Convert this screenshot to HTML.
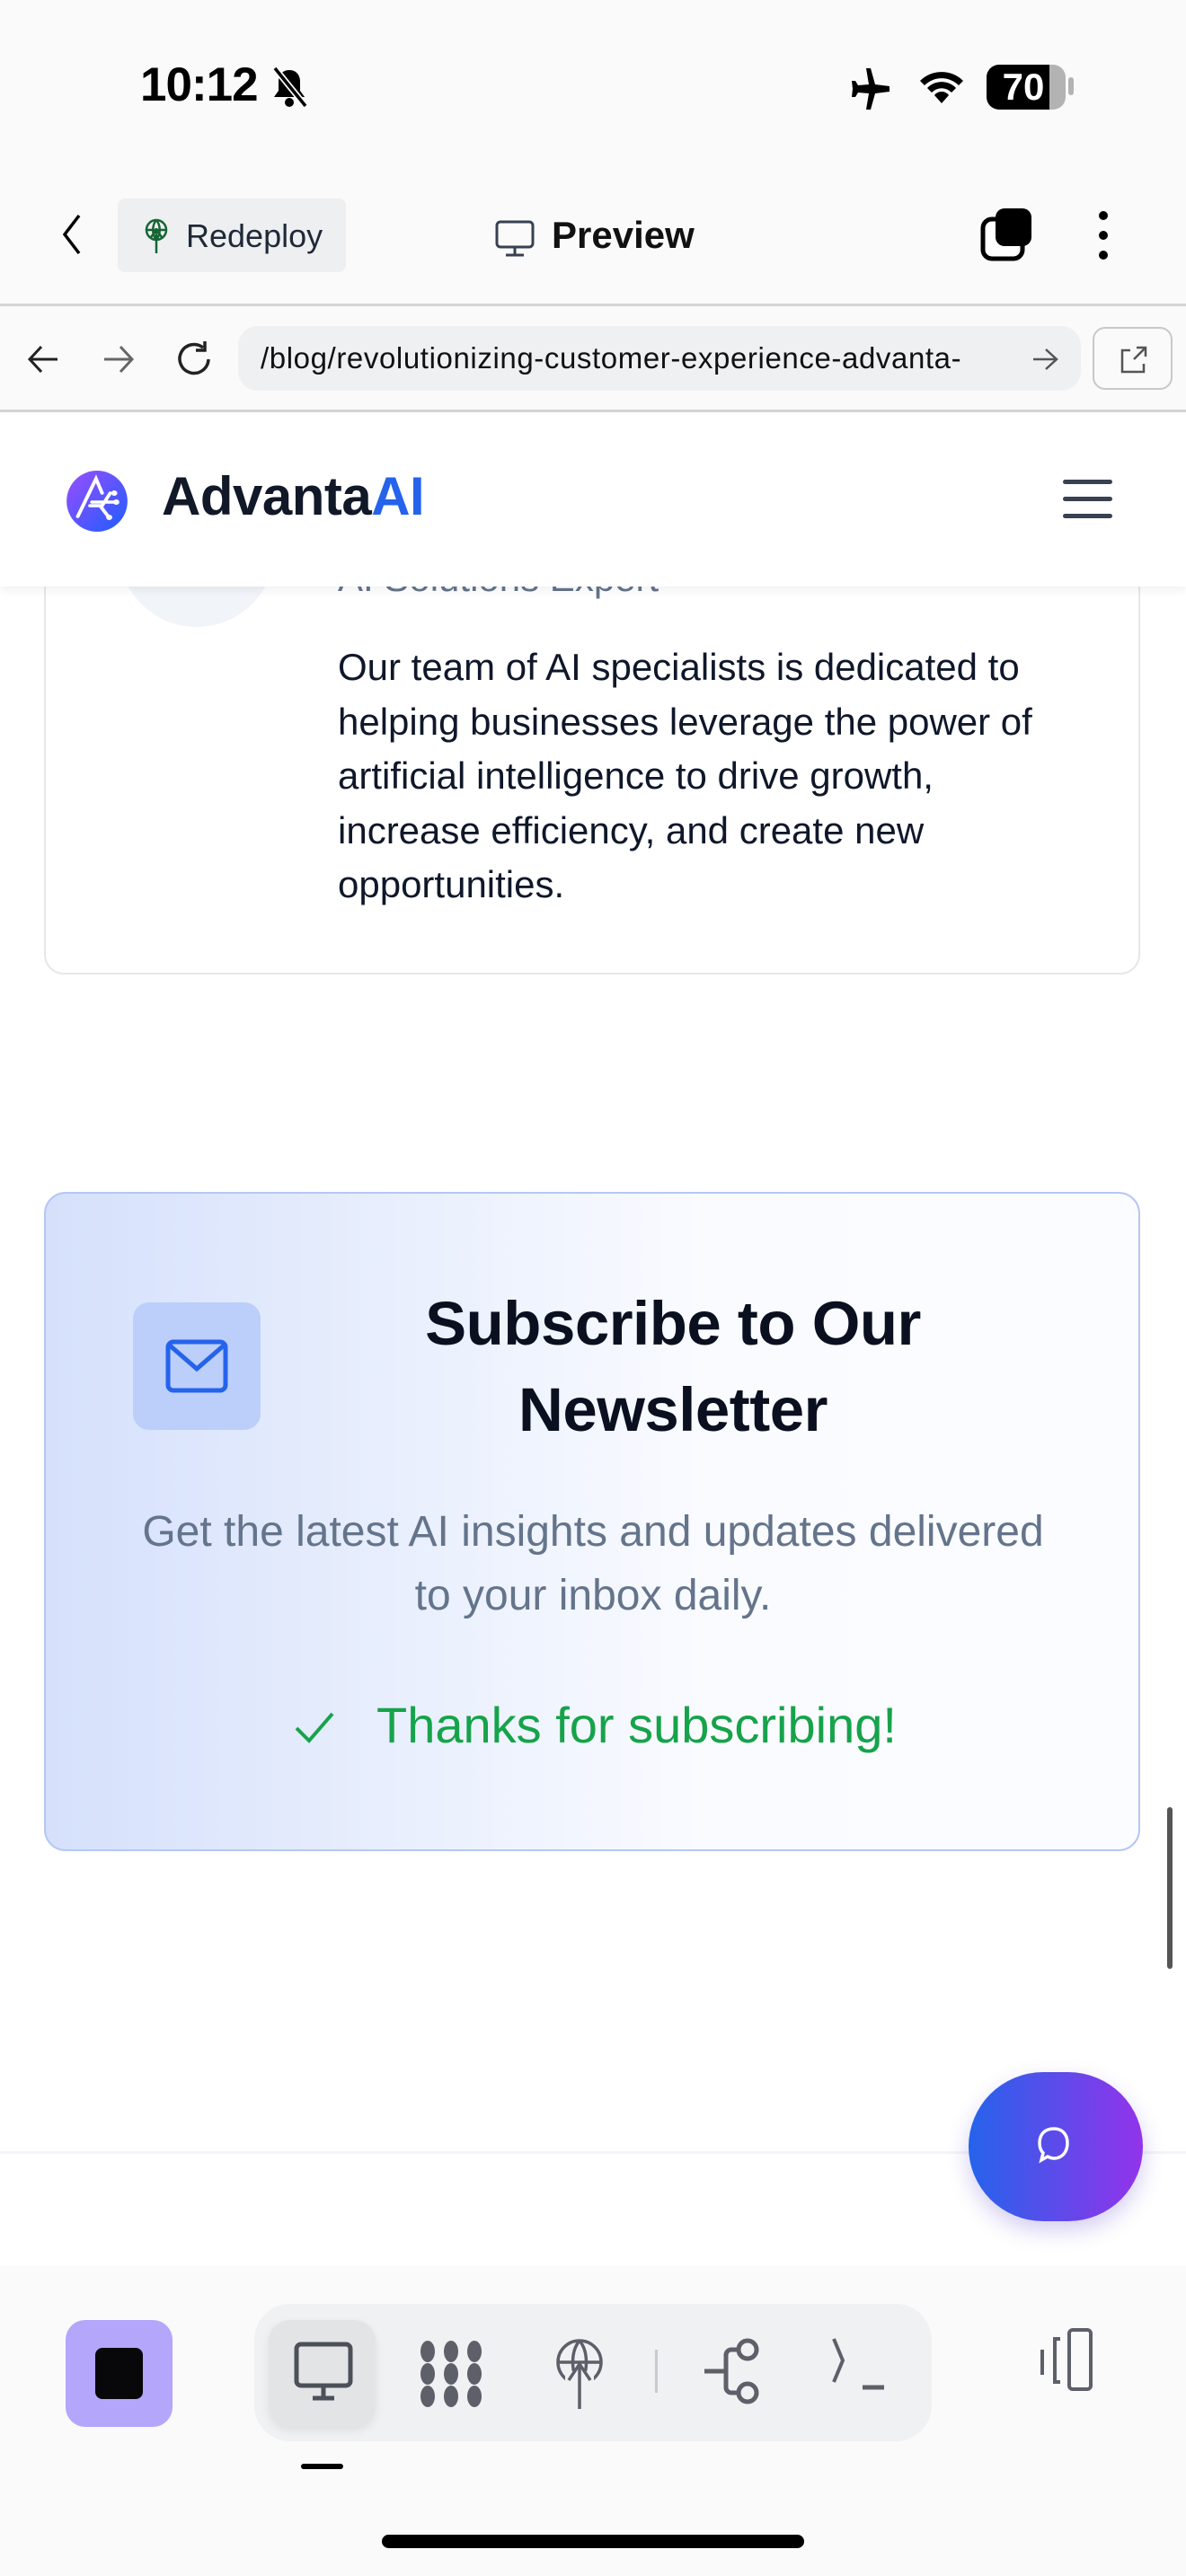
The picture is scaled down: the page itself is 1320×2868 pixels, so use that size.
<!DOCTYPE html>
<html><head><meta charset="utf-8">
<style>
*{margin:0;padding:0;box-sizing:border-box}
html,body{width:1320px;height:2868px;overflow:hidden;background:#fff;font-family:"Liberation Sans",sans-serif}
.abs{position:absolute}
</style></head><body>
<div class="abs" style="left:0;top:0;width:1320px;height:458px;background:#fafafa"></div>
<!-- status bar -->
<div class="abs" style="left:156px;top:64px;font-size:53px;font-weight:600;color:#000;letter-spacing:-1px">10:12</div>
<svg class="abs" style="left:300px;top:74px" width="44" height="46" viewBox="0 0 44 46"><path d="M22 4c-8 0-12 6-12 13v10l-5 7h34l-5-7V17c0-7-4-13-12-13z" fill="#000"/><circle cx="22" cy="40" r="5" fill="#000"/><path d="M6 2l34 42" stroke="#fafafa" stroke-width="7"/><path d="M6 2l34 42" stroke="#000" stroke-width="3.5"/></svg>
<svg class="abs" style="left:942px;top:74px" width="52" height="48" viewBox="0 0 52 48"><path d="M22 2l5 0 5 18 16 2v6l-16 2-5 18h-5l3-18-12-1-3 5h-4l1-9-1-9h4l3 5 12-1z" fill="#000"/></svg>
<svg class="abs" style="left:1020px;top:72px" width="56" height="48" viewBox="0 0 56 48"><path d="M4 18a34 34 0 0 1 48 0l-5 5a27 27 0 0 0-38 0z M12 26a22 22 0 0 1 32 0l-5 5a15 15 0 0 0-22 0z M20 34a10 10 0 0 1 16 0l-8 9z" fill="#000"/></svg>
<div class="abs" style="left:1098px;top:72px;width:88px;height:50px;border-radius:14px;background:#b3b3b3;overflow:hidden"><div style="width:70px;height:50px;background:#000"></div></div>
<div class="abs" style="left:1189px;top:86px;width:6px;height:20px;border-radius:3px;background:#b3b3b3"></div>
<div class="abs" style="left:1104px;top:70px;width:70px;text-align:center;font-size:42px;font-weight:700;color:#fff;line-height:54px">70</div>
<!-- toolbar -->
<svg class="abs" style="left:64px;top:236px" width="30" height="50" viewBox="0 0 30 50"><path d="M24 4L8 25l16 21" stroke="#000" stroke-width="3.5" fill="none"/></svg>
<div class="abs" style="left:131px;top:221px;width:254px;height:82px;border-radius:8px;background:#eeeff1"></div>
<svg class="abs" style="left:158px;top:242px" width="32" height="42" viewBox="0 0 32 42"><circle cx="16" cy="14" r="11" stroke="#166534" stroke-width="2.5" fill="none"/><path d="M5 14h22M16 3c-5 6-5 16 0 22M16 3c5 6 5 16 0 22M16 12v28M10 22l6-8 6 8" stroke="#166534" stroke-width="2.5" fill="none"/></svg>
<div class="abs" style="left:207px;top:242px;font-size:36px;color:#1f2937">Redeploy</div>
<svg class="abs" style="left:550px;top:244px" width="46" height="44" viewBox="0 0 46 44"><rect x="3" y="3" width="40" height="28" rx="4" stroke="#374151" stroke-width="3" fill="none"/><path d="M23 31v8M13 40h20" stroke="#374151" stroke-width="3"/></svg>
<div class="abs" style="left:614px;top:238px;font-size:42px;font-weight:600;color:#111">Preview</div>
<svg class="abs" style="left:1090px;top:230px" width="64" height="62" viewBox="0 0 64 62"><rect x="4" y="14" width="44" height="44" rx="10" stroke="#000" stroke-width="5" fill="#fff"/><rect x="18" y="2" width="40" height="42" rx="10" fill="#000"/></svg>
<svg class="abs" style="left:1216px;top:232px" width="24" height="60" viewBox="0 0 24 60"><circle cx="12" cy="8" r="5" fill="#000"/><circle cx="12" cy="30" r="5" fill="#000"/><circle cx="12" cy="52" r="5" fill="#000"/></svg>
<div class="abs" style="left:0;top:338px;width:1320px;height:3px;background:#d4d4d4"></div>
<!-- url row -->
<svg class="abs" style="left:28px;top:382px" width="40" height="36" viewBox="0 0 40 36"><path d="M36 18H6M18 4L5 18l13 14" stroke="#222" stroke-width="3" fill="none"/></svg>
<svg class="abs" style="left:112px;top:382px" width="40" height="36" viewBox="0 0 40 36"><path d="M4 18h30M22 4l13 14-13 14" stroke="#666" stroke-width="3" fill="none"/></svg>
<svg class="abs" style="left:194px;top:378px" width="46" height="46" viewBox="0 0 46 46"><path d="M38 22a16 16 0 1 1-6-13" stroke="#222" stroke-width="3.5" fill="none"/><path d="M34 2v10H24" stroke="#222" stroke-width="3.5" fill="none"/></svg>
<div class="abs" style="left:265px;top:363px;width:938px;height:72px;border-radius:22px;background:#eff0f2"></div>
<div class="abs" style="left:290px;top:380px;font-size:33px;color:#111;white-space:nowrap;letter-spacing:0.6px">/blog/revolutionizing-customer-experience-advanta-</div>
<svg class="abs" style="left:1148px;top:386px" width="32" height="28" viewBox="0 0 32 28"><path d="M2 14h26M16 3l12 11-12 11" stroke="#555" stroke-width="2.5" fill="none"/></svg>
<div class="abs" style="left:1216px;top:364px;width:89px;height:70px;border-radius:14px;border:2.5px solid #c8c8c8;background:#fafafa"></div>
<svg class="abs" style="left:1244px;top:384px" width="34" height="34" viewBox="0 0 34 34"><path d="M14 6H5v24h24v-9M18 16L31 3M21 3h10v10" stroke="#555" stroke-width="2.5" fill="none"/></svg>
<div class="abs" style="left:0;top:456px;width:1320px;height:3px;background:#d4d4d4"></div>

<!-- first card -->
<div class="abs" style="left:49px;top:500px;width:1220px;height:585px;border:2px solid #e5e7eb;border-top:none;border-radius:0 0 22px 22px;background:#fff"></div>
<div class="abs" style="left:131px;top:520px;width:176px;height:178px;border-radius:50%;background:#f1f4f8"></div>
<div class="abs" style="left:376px;top:620px;font-size:42px;color:#64748b">AI Solutions Expert</div>
<div class="abs" style="left:376px;top:713px;width:805px;font-size:42px;line-height:60.5px;color:#0f172a">Our team of AI specialists is dedicated to helping businesses leverage the power of artificial intelligence to drive growth, increase efficiency, and create new opportunities.</div>

<!-- header -->
<div class="abs" style="left:0;top:459px;width:1320px;height:194px;background:#fff;box-shadow:0 4px 10px rgba(0,0,0,0.06)"></div>
<svg class="abs" style="left:73px;top:523px" width="70" height="70" viewBox="0 0 62 70" preserveAspectRatio="none"><defs><linearGradient id="lg" x1="0" y1="0" x2="1" y2="1"><stop offset="0" stop-color="#9b4dff"/><stop offset="1" stop-color="#1d5eff"/></linearGradient></defs><ellipse cx="31" cy="35" rx="30" ry="34" fill="url(#lg)"/><path d="M12 52L30 10l6 16M24 40h12l8-14M26 36h22M34 40l8 12" stroke="#fff" stroke-width="3.5" fill="none" stroke-linecap="round"/><circle cx="48" cy="26" r="3" fill="#fff"/><circle cx="50" cy="36" r="3" fill="#fff"/><circle cx="43" cy="53" r="3" fill="#fff"/></svg>
<div class="abs" style="left:180px;top:518px;font-size:60px;font-weight:700;color:#111827;letter-spacing:-0.5px">Advanta<span style="color:#2563eb">AI</span></div>
<div class="abs" style="left:1183px;top:534px;width:55px;height:5px;border-radius:3px;background:#374151"></div>
<div class="abs" style="left:1183px;top:553px;width:55px;height:5px;border-radius:3px;background:#374151"></div>
<div class="abs" style="left:1183px;top:572px;width:55px;height:5px;border-radius:3px;background:#374151"></div>

<!-- newsletter -->
<div class="abs" style="left:49px;top:1327px;width:1220px;height:734px;border:2px solid #b4c8f5;border-radius:24px;background:linear-gradient(90deg,#d5e0fb 0%,#eaf0fd 35%,#f9fbff 60%,#fbfcff 100%)"></div>
<div class="abs" style="left:148px;top:1450px;width:142px;height:142px;border-radius:18px;background:#bccefa"></div>
<svg class="abs" style="left:183px;top:1490px" width="72" height="62" viewBox="0 0 72 62"><rect x="4" y="4" width="64" height="54" rx="6" stroke="#2563eb" stroke-width="5" fill="none"/><path d="M6 8l30 26 30-26" stroke="#2563eb" stroke-width="5" fill="none"/></svg>
<div class="abs" style="left:290px;top:1426px;width:918px;text-align:center;font-size:69px;font-weight:700;color:#0b1020;line-height:96px;letter-spacing:-0.5px">Subscribe to Our<br>Newsletter</div>
<div class="abs" style="left:60px;top:1670px;width:1200px;text-align:center;font-size:48px;line-height:71px;color:#64748b">Get the latest AI insights and updates delivered<br>to your inbox daily.</div>
<svg class="abs" style="left:326px;top:1902px" width="48" height="42" viewBox="0 0 48 42"><path d="M4 22l14 14L44 6" stroke="#16a34a" stroke-width="4" fill="none"/></svg>
<div class="abs" style="left:419px;top:1888px;font-size:56px;color:#16a34a">Thanks for subscribing!</div>
<div class="abs" style="left:1299px;top:2012px;width:6px;height:180px;border-radius:3px;background:#555"></div>

<div class="abs" style="left:0;top:2395px;width:1320px;height:3px;background:#f1f5f9"></div>
<div class="abs" style="left:1078px;top:2307px;width:194px;height:166px;border-radius:83px;background:linear-gradient(90deg,#2563eb,#9333ea);box-shadow:0 10px 24px rgba(80,60,200,0.25)"></div>
<svg class="abs" style="left:1152px;top:2366px" width="42" height="46" viewBox="0 0 42 46"><path d="M21 4c9 0 15 6 15 16s-6 17-15 17c-3 0-5-1-7-2l-7 4 2-8c-3-3-4-7-4-11 0-10 6-16 16-16z" stroke="#fff" stroke-width="3.5" fill="none"/></svg>

<!-- bottom bar -->
<div class="abs" style="left:0;top:2523px;width:1320px;height:345px;background:#fafafa"></div>
<div class="abs" style="left:73px;top:2583px;width:119px;height:119px;border-radius:22px;background:#b3a6fb"></div>
<div class="abs" style="left:106px;top:2614px;width:53px;height:57px;border-radius:8px;background:#08080a"></div>
<div class="abs" style="left:283px;top:2565px;width:754px;height:153px;border-radius:40px;background:#f0f1f3"></div>
<div class="abs" style="left:299px;top:2583px;width:119px;height:119px;border-radius:24px;background:#e3e4e6;box-shadow:0 4px 10px rgba(0,0,0,0.08)"></div>
<svg class="abs" style="left:326px;top:2606px" width="68" height="70" viewBox="0 0 68 70"><rect x="4" y="4" width="60" height="46" rx="5" stroke="#4b5059" stroke-width="5" fill="none"/><path d="M34 50v12M22 64h24" stroke="#4b5059" stroke-width="5"/></svg>
<svg class="abs" style="left:466px;top:2604px" width="74" height="78" viewBox="0 0 74 78"><g fill="#5d6069"><ellipse cx="10" cy="14" rx="8" ry="12"/><ellipse cx="36" cy="14" rx="8" ry="12"/><ellipse cx="62" cy="14" rx="8" ry="12"/><ellipse cx="10" cy="39" rx="8" ry="12"/><ellipse cx="36" cy="39" rx="8" ry="12"/><ellipse cx="62" cy="39" rx="8" ry="12"/><ellipse cx="10" cy="64" rx="8" ry="12"/><ellipse cx="36" cy="64" rx="8" ry="12"/><ellipse cx="62" cy="64" rx="8" ry="12"/></g></svg>
<svg class="abs" style="left:615px;top:2604px" width="60" height="80" viewBox="0 0 60 80"><circle cx="30" cy="26" r="24" stroke="#5d6069" stroke-width="3.5" fill="none"/><path d="M6 26h48M30 2c-10 12-10 36 0 48M30 2c10 12 10 36 0 48" stroke="#5d6069" stroke-width="3.5" fill="none"/><rect x="14" y="36" width="32" height="18" fill="#f0f1f3"/><path d="M30 28v50M18 46l12-18 12 18" stroke="#5d6069" stroke-width="3.5" fill="none"/></svg>
<div class="abs" style="left:729px;top:2616px;width:3px;height:48px;background:#c9cacd"></div>
<svg class="abs" style="left:780px;top:2598px" width="72" height="84" viewBox="0 0 72 84"><circle cx="52" cy="18" r="10" stroke="#5d6069" stroke-width="5" fill="none"/><circle cx="52" cy="66" r="10" stroke="#5d6069" stroke-width="5" fill="none"/><path d="M42 18h-8a6 6 0 0 0-6 6v36a6 6 0 0 0 6 6h8M4 42h24" stroke="#5d6069" stroke-width="5" fill="none"/></svg>
<svg class="abs" style="left:924px;top:2600px" width="70" height="80" viewBox="0 0 70 80"><path d="M4 4l10 24-10 24" stroke="#5d6069" stroke-width="4" fill="none"/><path d="M36 58h24" stroke="#5d6069" stroke-width="5"/></svg>
<svg class="abs" style="left:1150px;top:2590px" width="76" height="80" viewBox="0 0 76 80"><rect x="40" y="4" width="24" height="66" rx="4" stroke="#5d6069" stroke-width="4" fill="none"/><path d="M30 14h-6v48h6M10 26v28" stroke="#5d6069" stroke-width="4" fill="none"/></svg>
<div class="abs" style="left:335px;top:2743px;width:47px;height:6px;border-radius:3px;background:#000"></div>
<div class="abs" style="left:425px;top:2822px;width:470px;height:15px;border-radius:8px;background:#000"></div>
</body></html>
